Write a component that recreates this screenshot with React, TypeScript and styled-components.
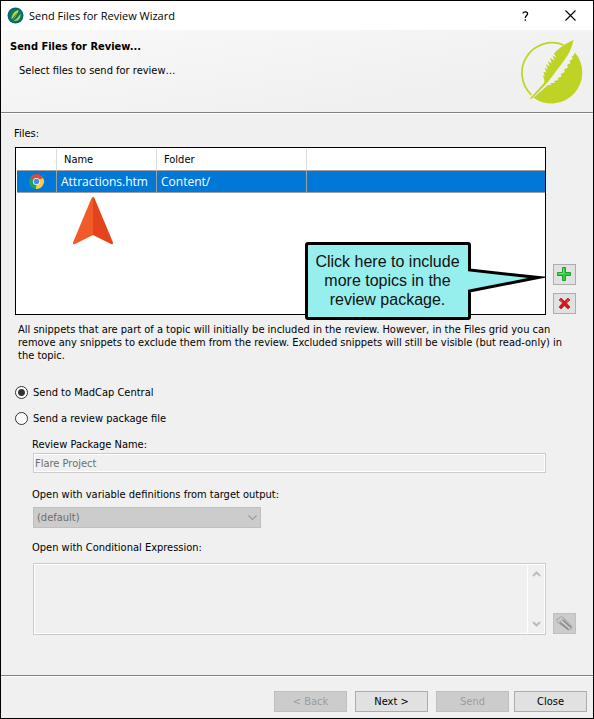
import React from "react";
import styled, { createGlobalStyle, css } from "styled-components";

const GlobalStyle = createGlobalStyle`
  *, *::before, *::after { box-sizing: border-box; }
  body {
    margin: 0;
    background: #f0f0f0;
    color: #000;
    font-family: "DejaVu Sans Condensed", "Noto Sans", sans-serif;
    font-size: 11px;
    line-height: 13px;
  }
  button, input, select, textarea { font: inherit; margin: 0; }
`;

const Window = styled.main`
  display: flex;
  flex-direction: column;
  min-height: 100vh;
  border: 1px solid #000;
  background: #f0f0f0;
`;

const TitleBar = styled.header`
  display: flex;
  align-items: center;
  height: 29px;
  padding: 0 0 0 6px;
  background: #fff;
`;

const AppTitle = styled.h1`
  flex: 1;
  margin: 0 0 0 5px;
  font-family: "Open Sans", sans-serif;
  font-size: 11px;
  font-weight: 400;
`;

const CaptionButton = styled.button`
  display: flex;
  align-items: center;
  justify-content: center;
  width: 45px;
  height: 28px;
  padding: 0;
  border: 0;
  background: transparent;
  color: #000;
`;

const Banner = styled.section`
  display: flex;
  justify-content: space-between;
  height: 83px;
  padding: 10px 9px 0 9px;
  border-bottom: 1px solid #808080;
  background: linear-gradient(170deg, #f9f9f9, #f0f0f0 75%);
  box-shadow: 0 1px 0 #fff;
`;

const BannerTitle = styled.h2`
  margin: 0;
  font-size: 11px;
  font-weight: 700;
`;

const BannerText = styled.p`
  margin: 11px 0 0 9px;
`;

const Body = styled.form`
  flex: 1;
  display: flex;
  flex-direction: column;
  padding: 14px 17px 30px 13px;
`;

const FieldRow = styled.div`
  display: flex;
  gap: 7px;
  margin-left: 1px;
`;

const SideButtons = styled.div`
  display: flex;
  flex-direction: column;
  justify-content: flex-end;
  gap: 8px;
  padding-bottom: 1px;
`;

const buttonFace = css`
  display: flex;
  align-items: center;
  justify-content: center;
  padding: 0;
  border: 1px solid #adadad;
  background: #e1e1e1;
  color: #000;
  &:disabled {
    border-color: #bfbfbf;
    background: #ccc;
    color: #9c9c9c;
  }
`;

const IconButton = styled.button`
  ${buttonFace}
  width: 23px;
  height: 21px;
`;

const PushButton = styled.button`
  ${buttonFace}
  width: 73px;
  height: 21px;
`;

const FilesLabel = styled.h3`
  margin: 0 0 7px;
  font-size: 11px;
  font-weight: 400;
`;

const GridBox = styled.div`
  position: relative;
  flex: 1;
  height: 168px;
  padding: 1px 0 0 1px;
  border: 1px solid #000;
  background: #fff;
`;

const FileTable = styled.table`
  width: 100%;
  table-layout: fixed;
  border-collapse: separate;
  border-spacing: 0;
`;

const Column = styled.col<{ $width?: number }>`
  ${(p) => p.$width && `width: ${p.$width}px;`}
`;

const HeadCell = styled.th`
  height: 22px;
  padding: 0 7px;
  border-right: 1px solid #dcdcdc;
  border-bottom: 1px solid #a0a0a0;
  text-align: left;
  font-weight: 400;
  &:last-child { border-right: 0; }
`;

const FileCell = styled.td`
  height: 22px;
  padding: 0 4px;
  border-right: 1px solid #a0a0a0;
  border-bottom: 1px solid #a0a0a0;
  background: #0078d7;
  color: #fff;
  font-family: "Open Sans", sans-serif;
  font-size: 12px;
  &:last-child { border-right: 0; }
  svg { display: block; margin: 0 auto; }
`;

const Pointer = styled.svg`
  position: absolute;
  left: 57px;
  top: 49px;
`;

const Callout = styled.div`
  position: absolute;
  right: -1px;
  bottom: -6px;
  width: 241px;
  height: 78px;
  z-index: 1;
  svg { position: absolute; inset: 0; }
`;

const CalloutText = styled.p`
  position: relative;
  width: 165px;
  margin: 0;
  padding: 10px 3px 0 3px;
  color: #111;
  font-family: "Liberation Sans", Arial, sans-serif;
  font-size: 16px;
  line-height: 19px;
  text-align: center;
`;

const Note = styled.p`
  margin: 8px 2px 24px 4px;
`;

const RadioLabel = styled.label`
  display: flex;
  align-items: center;
  gap: 5px;
  height: 13px;
  margin: 0 0 13px 1px;
`;

const Radio = styled.input`
  appearance: none;
  width: 13px;
  height: 13px;
  border: 1px solid #333;
  border-radius: 50%;
  background: #fff;
  &:checked {
    background: radial-gradient(circle, #333 3px, #fff 4px);
  }
`;

const Options = styled.fieldset`
  min-width: 0;
  margin: 0 0 0 18px;
  padding: 0;
  border: 0;
`;

const FieldLabel = styled.label`
  display: block;
  margin: 0 0 2px;
`;

const TextField = styled.input`
  flex: 1;
  min-width: 0;
  height: 20px;
  margin-right: 30px;
  padding: 0 1px;
  border: 1px solid #ccc;
  outline: 1px solid #fff;
  outline-offset: -2px;
  background: #f0f0f0;
  color: #6d6d6d;
`;

const Spaced = styled.div<{ $gap: number }>`
  margin-bottom: ${(p) => p.$gap}px;
`;

const SelectBox = styled.div`
  position: relative;
  width: 228px;
  margin: 6px 0 0 1px;
  svg { position: absolute; right: 4px; top: 8px; }
`;

const Select = styled.select`
  display: block;
  appearance: none;
  width: 100%;
  height: 21px;
  padding: 0 3px;
  border: 1px solid #bfbfbf;
  border-radius: 0;
  background: #ccc;
  color: #6d6d6d;
  &:disabled { opacity: 1; }
`;

const ExpressionBox = styled.div`
  display: flex;
  flex: 1;
  height: 72px;
  margin-top: 7px;
  padding: 1px;
  border: 1px solid #ccc;
  box-shadow: inset 0 0 0 1px #fff;
`;

const Expression = styled.textarea`
  flex: 1;
  border: 0;
  background: transparent;
  resize: none;
`;

const ScrollRail = styled.div`
  display: flex;
  flex-direction: column;
  justify-content: space-between;
  align-items: center;
  width: 17px;
  padding: 6px 0;
  border-left: 1px solid #fff;
`;

const Footer = styled.footer`
  display: flex;
  justify-content: flex-end;
  gap: 8px;
  height: 43px;
  padding: 15px 6px 0;
  border-top: 1px solid #808080;
  box-shadow: inset 0 1px 0 #fff;
`;

const LastButtons = styled.div`
  display: flex;
  gap: 5px;
`;

const AppIcon = () => (
  <svg width="17" height="17" viewBox="0 0 17 17" aria-hidden="true">
    <circle cx="8.5" cy="8.5" r="8" fill="#0b6472" />
    <circle cx="8.5" cy="8.5" r="6.5" fill="#08766f" />
    <path d="M4.5 12C4.5 8 7 4.5 11.5 2.8C11.5 6 9.5 9 5.5 12.5Z" fill="#bdd62f" />
    <path d="M6.5 13.8C11.5 14.5 14 11 13.4 6.4C12 9.5 9.5 12 6.5 13.8Z" fill="#bdd62f" />
    <path d="M3.5 14L10.5 6" stroke="#08656a" strokeWidth="0.8" />
  </svg>
);

const FeatherLogo = () => (
  <svg width="64" height="66" viewBox="0 0 64 66" aria-hidden="true">
    <path d="M43.6 5A30.2 30.2 0 0 0 11.3 54.8" fill="none" stroke="#bed324" strokeWidth="1.7" />
    <path
      d="M55 12.5A31 31 0 0 1 13.4 57.8L28 45L31.5 44.8L30.5 43L35 43L34 41L38.5 40L37.5 38.2L41.5 36.5L40.8 34L44.8 32L44 29.5L48 27.5L47 25L50.5 23L49.5 21L53 18.5L51.5 17L54 15Z"
      fill="#bed324"
    />
    <path
      d="M53.6 0C46 3 38.5 8.5 34 13.5L36.5 18L32.5 15.2L34.3 20.5L30 17.8L31.8 23.4L27.8 21L29.8 26.5L26 24L27.8 29.8L24.6 27.5L26.5 33L23.4 31.5L24.8 36.5L22.8 35.5C24 39 25 40 24 43L9.5 59L12 58.5L28 42C34 33.5 42 24 47.5 15.5C50.5 10.5 52.5 5 53.6 0Z"
      fill="#bed324"
    />
  </svg>
);

const ChromeIcon = () => (
  <svg width="15" height="15" viewBox="0 0 48 48" aria-hidden="true">
    <path d="M24 24L3.5 12A24 24 0 0 1 44.6 12Z" fill="#dc4b3e" />
    <path d="M24 24L44.6 12A24 24 0 0 1 22 48Z" fill="#fcce45" />
    <path d="M24 24L22 48A24 24 0 0 1 3.5 12Z" fill="#21a35d" />
    <circle cx="24" cy="24" r="11.5" fill="#f3f3f3" />
    <circle cx="24" cy="24" r="8.8" fill="#4a87ee" />
  </svg>
);

const PlusIcon = () => (
  <svg width="15" height="15" viewBox="0 0 15 15" aria-hidden="true">
    <path d="M5.5 0.5H8.5V5.5H13.5V8.5H8.5V13.5H5.5V8.5H0.5V5.5H5.5Z" fill="#2fd03c" stroke="#1f9d35" />
    <path d="M6.5 1.5V6.5H1.5" fill="none" stroke="#7be57a" />
  </svg>
);

const DeleteIcon = () => (
  <svg width="13" height="13" viewBox="0 0 13 13" aria-hidden="true">
    <path
      d="M1 3L3 1L6.5 4.3L10 1L12 3L8.5 6L12 10L10 12L6.5 8.8L3 12L1 10L4.5 6Z"
      fill="#d5161b"
      stroke="#8f1a1f"
      strokeWidth="0.6"
    />
    <path d="M2.2 3L4.5 5.2M8.5 4.5L10.8 2.5" fill="none" stroke="#e8696b" />
  </svg>
);

const PencilsIcon = () => (
  <svg width="17" height="15" viewBox="0 0 17 15" aria-hidden="true">
    <path d="M1 6V3L3.5 3L4 1L7 1L16 10.5L15.5 13L12.5 14Z" fill="#bdbdbd" stroke="#a9a9a9" />
    <path d="M7 4L15 11.5M4 6.5L12.5 13.5" stroke="#8a8a8a" strokeWidth="1.5" />
    <path d="M5.5 5L14 12.5" stroke="#dadada" />
    <path d="M1.5 5.5L3.5 4L5.5 1.5" fill="none" stroke="#dedede" />
  </svg>
);

const SelectArrow = () => (
  <svg width="9" height="6" viewBox="0 0 9 6" aria-hidden="true">
    <path d="M0.5 0.5L4.5 4.5L8.5 0.5" fill="none" stroke="#9b9b9b" strokeWidth="1.1" />
  </svg>
);

const ScrollArrow = ({ up = false }: { up?: boolean }) => (
  <svg width="9" height="6" viewBox="0 0 9 6" aria-hidden="true">
    <path d={up ? "M1 5L4.5 1.5L8 5" : "M1 1L4.5 4.5L8 1"} fill="none" stroke="#bdbdbd" strokeWidth="2" />
  </svg>
);

export default function App() {
  return (
    <>
      <GlobalStyle />
      <Window>
        <TitleBar>
          <AppIcon />
          <AppTitle>Send Files for Review Wizard</AppTitle>
          <CaptionButton type="button" aria-label="Help">
            <svg width="7" height="10" viewBox="0 0 7 10">
              <path d="M1 2.5C1 0.4 5.6 0.2 5.6 2.8C5.6 4.6 3.3 4.6 3.3 7M3.3 8.2V9.7" fill="none" stroke="#000" strokeWidth="1.3" />
            </svg>
          </CaptionButton>
          <CaptionButton type="button" aria-label="Close window">
            <svg width="11" height="11" viewBox="0 0 11 11">
              <path d="M0.5 0.5L10.5 10.5M10.5 0.5L0.5 10.5" stroke="#000" strokeWidth="1.1" />
            </svg>
          </CaptionButton>
        </TitleBar>
        <Banner>
          <div>
            <BannerTitle>Send Files for Review...</BannerTitle>
            <BannerText>Select files to send for review…</BannerText>
          </div>
          <FeatherLogo />
        </Banner>
        <Body onSubmit={(e: React.FormEvent) => e.preventDefault()}>
          <FilesLabel id="files-label">Files:</FilesLabel>
          <FieldRow>
            <GridBox>
              <FileTable aria-labelledby="files-label">
                <colgroup>
                  <Column $width={40} />
                  <Column $width={100} />
                  <Column $width={150} />
                  <Column />
                </colgroup>
                <thead>
                  <tr>
                    <HeadCell />
                    <HeadCell>Name</HeadCell>
                    <HeadCell>Folder</HeadCell>
                    <HeadCell />
                  </tr>
                </thead>
                <tbody>
                  <tr>
                    <FileCell><ChromeIcon /></FileCell>
                    <FileCell>Attractions.htm</FileCell>
                    <FileCell>Content/</FileCell>
                    <FileCell />
                  </tr>
                </tbody>
              </FileTable>
              <Pointer width="40" height="48" viewBox="0 0 40 48" aria-hidden="true">
                <path d="M20 0Q21 0 21.5 1.2L40 45.5Q40.2 47.8 38.5 47.2L20 38Z" fill="#e5431b" />
                <path d="M20 0Q19 0 18.5 1.2L0 45.5Q-0.2 47.8 1.5 47.2L20 38Z" fill="#f15a29" />
              </Pointer>
              <Callout>
                <svg width="241" height="78" viewBox="0 0 241 78" aria-hidden="true">
                  <path
                    d="M3 1.5H163Q164.5 1.5 164.5 3V28L233 35.5L164.5 49V75Q164.5 76.5 163 76.5H3Q1.5 76.5 1.5 75V3Q1.5 1.5 3 1.5Z"
                    fill="#96efed"
                    stroke="#000"
                    strokeWidth="3"
                    strokeLinejoin="miter"
                    strokeMiterlimit="12"
                  />
                </svg>
                <CalloutText>Click here to include more topics in the review package.</CalloutText>
              </Callout>
            </GridBox>
            <SideButtons>
              <IconButton type="button" aria-label="Add files"><PlusIcon /></IconButton>
              <IconButton type="button" aria-label="Remove file"><DeleteIcon /></IconButton>
            </SideButtons>
          </FieldRow>
          <Note>
            All snippets that are part of a topic will initially be included in the review. However, in the Files grid you can
            remove any snippets to exclude them from the review. Excluded snippets will still be visible (but read-only) in
            the topic.
          </Note>
          <RadioLabel>
            <Radio type="radio" name="destination" defaultChecked />
            Send to MadCap Central
          </RadioLabel>
          <RadioLabel>
            <Radio type="radio" name="destination" />
            Send a review package file
          </RadioLabel>
          <Options disabled>
            <Spaced $gap={15}>
              <FieldLabel htmlFor="package-name">Review Package Name:</FieldLabel>
              <FieldRow>
                <TextField id="package-name" defaultValue="Flare Project" />
              </FieldRow>
            </Spaced>
            <Spaced $gap={13}>
              <FieldLabel htmlFor="target">Open with variable definitions from target output:</FieldLabel>
              <SelectBox>
                <Select id="target" defaultValue="default">
                  <option value="default">(default)</option>
                </Select>
                <SelectArrow />
              </SelectBox>
            </Spaced>
            <FieldLabel htmlFor="expression">Open with Conditional Expression:</FieldLabel>
            <FieldRow>
              <ExpressionBox>
                <Expression id="expression" />
                <ScrollRail aria-hidden="true">
                  <ScrollArrow up />
                  <ScrollArrow />
                </ScrollRail>
              </ExpressionBox>
              <SideButtons>
                <IconButton type="button" aria-label="Edit expression"><PencilsIcon /></IconButton>
              </SideButtons>
            </FieldRow>
          </Options>
        </Body>
        <Footer>
          <PushButton type="button" disabled>&lt; Back</PushButton>
          <PushButton type="button">Next &gt;</PushButton>
          <LastButtons>
            <PushButton type="button" disabled>Send</PushButton>
            <PushButton type="button">Close</PushButton>
          </LastButtons>
        </Footer>
      </Window>
    </>
  );
}
